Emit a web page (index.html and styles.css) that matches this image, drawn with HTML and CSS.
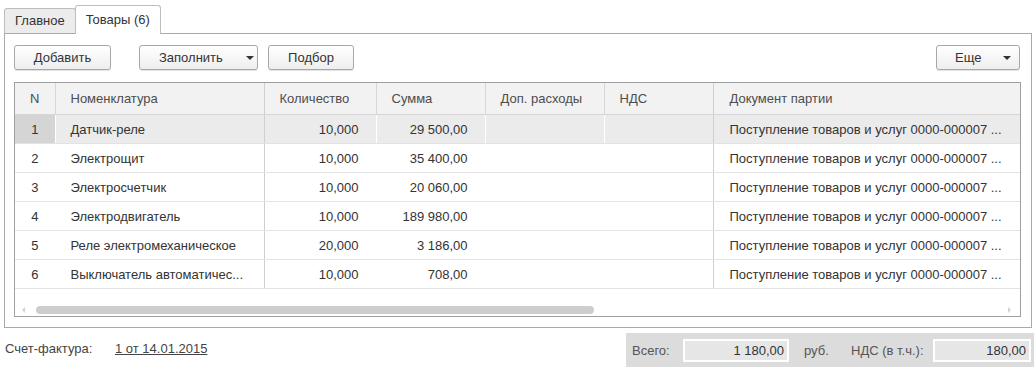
FILE: index.html
```html
<!DOCTYPE html>
<html lang="ru">

<head>
    <meta charset="UTF-8">
    <meta name="viewport" content="width=device-width, initial-scale=1.0">
    <title>Товары</title>
    <link rel="stylesheet" href="styles.css">
</head>

<body>
    <div class="form">
        <div class="tabs">
            <div class="tab">Главное</div>
            <div class="tab active">Товары (6)</div>
        </div>

        <div class="panel">
            <div class="toolbar">
                <button class="btn btn-add">Добавить</button>
                <button class="btn btn-fill">Заполнить <span class="arrow"></span></button>
                <button class="btn btn-pick">Подбор</button>
                <div class="spacer"></div>
                <button class="btn btn-more">Еще <span class="arrow"></span></button>
            </div>

            <div class="grid">
                <table>
                    <colgroup>
                        <col style="width: 40px">
                        <col style="width: 209px">
                        <col style="width: 112px">
                        <col style="width: 109px">
                        <col style="width: 119px">
                        <col style="width: 109px">
                        <col>
                    </colgroup>
                    <thead>
                        <tr>
                            <th class="num">N</th>
                            <th class="split">Номенклатура</th>
                            <th>Количество</th>
                            <th>Сумма</th>
                            <th>Доп. расходы</th>
                            <th class="split">НДС</th>
                            <th class="last">Документ партии</th>
                        </tr>
                    </thead>
                    <tbody>
                        <tr class="selected">
                            <td class="num">1</td>
                            <td class="split">Датчик-реле</td>
                            <td class="right">10,000</td>
                            <td class="right">29 500,00</td>
                            <td></td>
                            <td class="split"></td>
                            <td class="last">Поступление товаров и услуг 0000-000007 ...</td>
                        </tr>
                        <tr>
                            <td class="num">2</td>
                            <td class="split">Электрощит</td>
                            <td class="right">10,000</td>
                            <td class="right">35 400,00</td>
                            <td></td>
                            <td class="split"></td>
                            <td class="last">Поступление товаров и услуг 0000-000007 ...</td>
                        </tr>
                        <tr>
                            <td class="num">3</td>
                            <td class="split">Электросчетчик</td>
                            <td class="right">10,000</td>
                            <td class="right">20 060,00</td>
                            <td></td>
                            <td class="split"></td>
                            <td class="last">Поступление товаров и услуг 0000-000007 ...</td>
                        </tr>
                        <tr>
                            <td class="num">4</td>
                            <td class="split">Электродвигатель</td>
                            <td class="right">10,000</td>
                            <td class="right">189 980,00</td>
                            <td></td>
                            <td class="split"></td>
                            <td class="last">Поступление товаров и услуг 0000-000007 ...</td>
                        </tr>
                        <tr>
                            <td class="num">5</td>
                            <td class="split">Реле электромеханическое</td>
                            <td class="right">20,000</td>
                            <td class="right">3 186,00</td>
                            <td></td>
                            <td class="split"></td>
                            <td class="last">Поступление товаров и услуг 0000-000007 ...</td>
                        </tr>
                        <tr>
                            <td class="num">6</td>
                            <td class="split">Выключатель автоматичес...</td>
                            <td class="right">10,000</td>
                            <td class="right">708,00</td>
                            <td></td>
                            <td class="split"></td>
                            <td class="last">Поступление товаров и услуг 0000-000007 ...</td>
                        </tr>
                    </tbody>
                </table>

                <div class="hscroll">
                    <span class="scroll-left"></span>
                    <div class="track">
                        <div class="thumb"></div>
                    </div>
                    <span class="scroll-right"></span>
                </div>
            </div>
        </div>

        <div class="footer">
            <div class="invoice">
                <span class="label">Счет-фактура:</span>
                <a class="link" href="#">1 от 14.01.2015</a>
            </div>
            <div class="totals">
                <span class="total-label">Всего:</span>
                <div class="field field-sum">1 180,00</div>
                <span class="currency">руб.</span>
                <span class="total-label vat-label">НДС (в т.ч.):</span>
                <div class="field field-vat">180,00</div>
            </div>
        </div>
    </div>
</body>

</html>
```

FILE: styles.css
```css
body {
    margin: 0;
    background-color: #fff;
    color: #333;
    font-family: 'Liberation Sans', Arial, sans-serif;
    font-size: 13px;
}

.form {
    width: 1034px;
    height: 367px;
    overflow: hidden;
}

/* tabs */

.tabs {
    display: flex;
    align-items: flex-end;
    height: 28px;
    padding: 5px 0 0 4px;
}

.tab {
    height: 24px;
    line-height: 24px;
    padding: 0 10px;
    background-color: #ececec;
    border: 1px solid #bdbdbd;
    border-bottom: none;
    border-radius: 3px 3px 0 0;
    color: #333;
    white-space: nowrap;
}

.tab.active {
    height: 28px;
    line-height: 28px;
    padding: 0 10px;
    background-color: #fff;
    margin-left: -1px;
    margin-bottom: -1px;
    position: relative;
    z-index: 1;
}

/* panel */

.panel {
    margin-left: 4px;
    width: 1007px;
    height: 272px;
    padding: 11px 10px 10px 9px;
    border: 1px solid #a9a9a9;
}

.toolbar {
    display: flex;
    height: 25px;
}

.btn {
    display: flex;
    align-items: center;
    justify-content: center;
    height: 25px;
    padding: 0;
    font-family: inherit;
    font-size: 13px;
    color: #333;
    background: linear-gradient(#ffffff, #eeeeee);
    border: 1px solid #a8a8a8;
    border-radius: 3px;
    box-shadow: 0 1px 0 #e2e2e2;
}

.btn-add {
    width: 97px;
}

.btn-fill {
    width: 119px;
    margin-left: 28px;
    justify-content: flex-start;
    padding-left: 19px;
}

.btn-fill .arrow {
    margin-left: 23px;
}

.btn-pick {
    width: 86px;
    margin-left: 10px;
}

.spacer {
    flex: 1;
}

.btn-more {
    width: 84px;
    margin-right: 1px;
    justify-content: flex-start;
    padding-left: 18px;
}

.btn-more .arrow {
    margin-left: 22px;
}

.arrow {
    width: 0;
    height: 0;
    border-left: 4px solid transparent;
    border-right: 4px solid transparent;
    border-top: 4px solid #333;
}

/* grid */

.grid {
    margin-top: 12px;
    height: 233px;
    border: 1px solid #a0a0a0;
    overflow: hidden;
}

table {
    width: 100%;
    table-layout: fixed;
    border-collapse: collapse;
}

th {
    height: 31px;
    padding: 0 15px;
    background-color: #f2f2f2;
    color: #4d4d4d;
    font-weight: normal;
    text-align: left;
    white-space: nowrap;
    border-right: 1px solid #d6d6d6;
    border-bottom: 1px solid #d6d6d6;
}

td {
    height: 28px;
    padding: 0 15px;
    white-space: nowrap;
    overflow: hidden;
    border-right: 1px solid #fff;
    border-bottom: 1px solid #e3e3e3;
}

th.num,
td.num {
    text-align: center;
    padding: 0;
}

th.split,
td.split {
    border-right-color: #cfcfcf;
}

th.last,
td.last {
    border-right: none;
    padding-left: 16px;
}

td.right {
    text-align: right;
    padding-right: 17px;
}

tr.selected td {
    background-color: #ebebeb;
}

tr.selected td.num {
    background-color: #d5d5d5;
}

.hscroll {
    display: flex;
    align-items: center;
    height: 8px;
    margin-top: 17px;
    padding: 0 9px 0 7px;
}

.track {
    flex: 1;
    padding: 0 11px;
}

.thumb {
    width: 558px;
    height: 8px;
    background-color: #cdcdcd;
    border-radius: 4px;
}

.scroll-left {
    width: 0;
    height: 0;
    border-top: 3px solid transparent;
    border-bottom: 3px solid transparent;
    border-right: 3px solid #d4d4d4;
}

.scroll-right {
    width: 0;
    height: 0;
    border-top: 3px solid transparent;
    border-bottom: 3px solid transparent;
    border-left: 3px solid #d4d4d4;
}

/* footer */

.footer {
    display: flex;
    justify-content: space-between;
    margin-top: 5px;
}

.invoice {
    display: flex;
    align-items: center;
    height: 30px;
    padding-left: 5px;
    color: #444;
}

.invoice .label {
    width: 110px;
}

.link {
    color: #444;
    text-decoration: underline;
}

.totals {
    display: flex;
    align-items: center;
    width: 402px;
    height: 34px;
    padding-left: 6px;
    background-color: #dcdcdc;
    color: #555;
}

.total-label {
    width: 51px;
}

.field {
    height: 19px;
    line-height: 19px;
    padding-right: 3px;
    text-align: right;
    background-color: #e6e6e6;
    border: 2px solid #fff;
    color: #333;
}

.field-sum {
    width: 99px;
}

.currency {
    margin-left: 15px;
    width: 47px;
}

.vat-label {
    width: 82px;
}

.field-vat {
    width: 91px;
}
```
